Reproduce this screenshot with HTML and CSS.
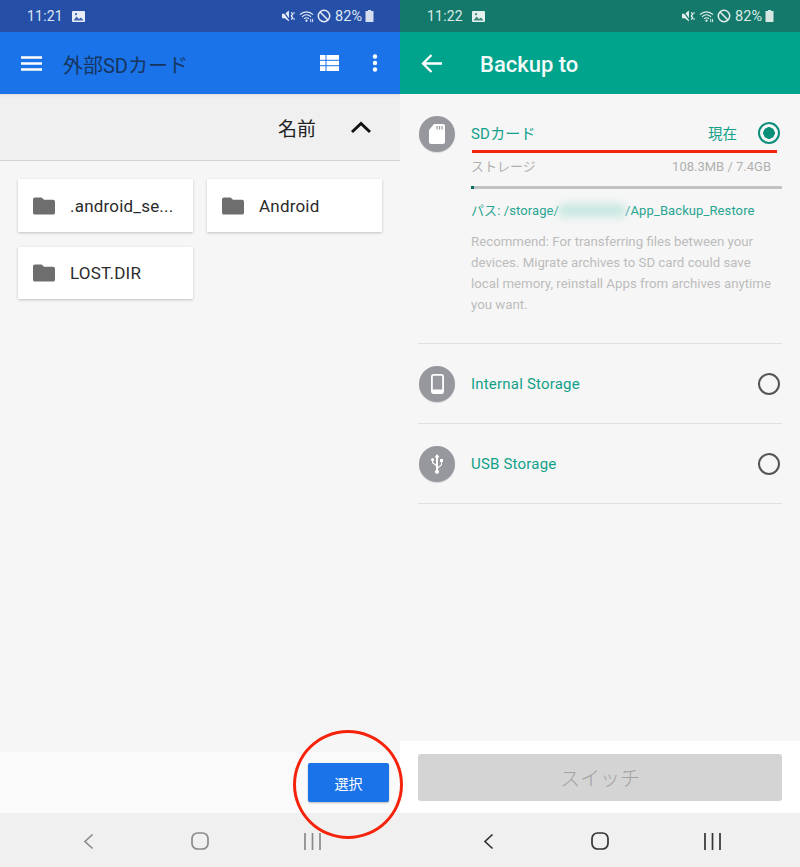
FILE: index.html
```html
<!DOCTYPE html>
<html lang="ja">
<head>
<meta charset="utf-8">
<title>Backup to</title>
<link rel="stylesheet" href="styles.css">
</head>
<body>
<div class="screens">
  <section class="pane pane-left">
    <header class="status status-blue">
      <span class="time">11:21</span>
      <svg class="pic" viewBox="0 0 13 11"><rect width="13" height="11" rx="1" fill="#e6edf8"/><path d="M1.500 9.500l3-4 2.500 2.500 2-1.500 2.500 3z" fill="#3f63b0"/><circle cx="4" cy="3.200" r="1.100" fill="#3f63b0"/></svg>
      <span class="spacer"></span>
      <svg class="sys-mute" viewBox="0 0 14 13"><path d="M0 4h3l4.500-3.500v12L3 9H0z" fill="#e6edf8"/><path d="M1 1l8 11" stroke="currentColor" stroke-width="1.300"/><path d="M10 2.500l1.500 2L10 6.500l1.500 2L10 10.500M12.500 2.500l1 1.500M12.500 9l1 1.500" stroke="#e6edf8" stroke-width="1.400" fill="none"/></svg>
      <svg class="sys-wifi" viewBox="0 0 16 13"><path d="M1 4.500c4-4 10-4 14 0M3.200 6.800c2.800-2.700 6.800-2.700 9.600 0M5.300 9c1.500-1.300 3.900-1.300 5.400 0" stroke="#e6edf8" stroke-width="1.200" fill="none"/><circle cx="8" cy="11" r="1.200" fill="#e6edf8"/><path d="M12.500 9v3.500M14.500 9v3.500" stroke="#e6edf8" stroke-width="1"/></svg>
      <svg class="sys-block" viewBox="0 0 13 13"><circle cx="6.500" cy="6.500" r="5.300" stroke="#e6edf8" stroke-width="1.400" fill="none"/><path d="M2.800 2.800l7.400 7.400" stroke="#e6edf8" stroke-width="1.400"/></svg>
      <span class="pct">82%</span>
      <svg class="batt" viewBox="0 0 8 12"><path d="M2.500 0h3v1H8v11H0V1h2.500z" fill="#d5deef"/></svg>
    </header>
    <div class="appbar appbar-blue">
      <svg class="menu" viewBox="0 0 21 15"><path d="M0 1.500h21M0 7.500h21M0 13.500h21" stroke="#fff" stroke-width="2.400"/></svg>
      <h1 class="title-left">外部SDカード</h1>
      <span class="spacer"></span>
      <svg class="list-view" viewBox="0 0 19 16"><path fill="#fff" d="M0 0h19v16H0z"/><path d="M0 5.300h19M0 10.700h19M6 0v16" stroke="#1a73e8" stroke-width="1"/></svg>
      <svg class="more" viewBox="0 0 6 18"><circle cx="3" cy="2.500" r="2.200" fill="#fff"/><circle cx="3" cy="9" r="2.200" fill="#fff"/><circle cx="3" cy="15.500" r="2.200" fill="#fff"/></svg>
    </div>
    <div class="sortbar">
      <span class="sort-label">名前</span>
      <svg class="sort-arrow" viewBox="0 0 22 13"><path d="M2 11l9-8.500 9 8.500" stroke="#111" stroke-width="3" fill="none"/></svg>
    </div>
    <main class="files">
      <div class="card"><svg class="folder" viewBox="0 0 23 18"><path d="M2 0h7l2.500 2.500H21a2 2 0 0 1 2 2V16a2 2 0 0 1-2 2H2a2 2 0 0 1-2-2V2a2 2 0 0 1 2-2z" fill="#6e6e6e"/></svg><span class="name">.android_se...</span></div>
      <div class="card"><svg class="folder" viewBox="0 0 23 18"><path d="M2 0h7l2.500 2.500H21a2 2 0 0 1 2 2V16a2 2 0 0 1-2 2H2a2 2 0 0 1-2-2V2a2 2 0 0 1 2-2z" fill="#6e6e6e"/></svg><span class="name">Android</span></div>
      <div class="card card-short"><svg class="folder" viewBox="0 0 23 18"><path d="M2 0h7l2.500 2.500H21a2 2 0 0 1 2 2V16a2 2 0 0 1-2 2H2a2 2 0 0 1-2-2V2a2 2 0 0 1 2-2z" fill="#6e6e6e"/></svg><span class="name">LOST.DIR</span></div>
    </main>
    <div class="footer-left"><button class="select">選択</button></div>
    <nav class="navbar navbar-faded navbar-left">
      <svg class="nav-back" viewBox="0 0 11 17"><path d="M9.500 1.500L2 8.500l7.500 7" stroke="currentColor" stroke-width="1.700" fill="none"/></svg>
      <svg class="nav-home" viewBox="0 0 18 18"><rect x="1" y="1" width="16" height="16" rx="5.500" stroke="currentColor" stroke-width="1.700" fill="none"/></svg>
      <svg class="nav-recent" viewBox="0 0 17 17"><path d="M1 0v17M8.500 0v17M16 0v17" stroke="currentColor" stroke-width="1.700"/></svg>
    </nav>
  </section>

  <section class="pane pane-right">
    <header class="status status-teal">
      <span class="time">11:22</span>
      <svg class="pic" viewBox="0 0 13 11"><rect width="13" height="11" rx="1" fill="#e6f0ee"/><path d="M1.500 9.500l3-4 2.500 2.500 2-1.500 2.500 3z" fill="#3a8a7e"/><circle cx="4" cy="3.200" r="1.100" fill="#3a8a7e"/></svg>
      <span class="spacer"></span>
      <svg class="sys-mute" viewBox="0 0 14 13"><path d="M0 4h3l4.500-3.500v12L3 9H0z" fill="#e6f0ee"/><path d="M1 1l8 11" stroke="currentColor" stroke-width="1.300"/><path d="M10 2.500l1.500 2L10 6.500l1.500 2L10 10.500M12.500 2.500l1 1.500M12.500 9l1 1.500" stroke="#e6f0ee" stroke-width="1.400" fill="none"/></svg>
      <svg class="sys-wifi" viewBox="0 0 16 13"><path d="M1 4.500c4-4 10-4 14 0M3.200 6.800c2.800-2.700 6.800-2.700 9.600 0M5.300 9c1.500-1.300 3.900-1.300 5.400 0" stroke="#e6f0ee" stroke-width="1.200" fill="none"/><circle cx="8" cy="11" r="1.200" fill="#e6f0ee"/><path d="M12.500 9v3.500M14.500 9v3.500" stroke="#e6f0ee" stroke-width="1"/></svg>
      <svg class="sys-block" viewBox="0 0 13 13"><circle cx="6.500" cy="6.500" r="5.300" stroke="#e6f0ee" stroke-width="1.400" fill="none"/><path d="M2.800 2.800l7.400 7.400" stroke="#e6f0ee" stroke-width="1.400"/></svg>
      <span class="pct">82%</span>
      <svg class="batt" viewBox="0 0 8 12"><path d="M2.500 0h3v1H8v11H0V1h2.500z" fill="#d5e6e3"/></svg>
    </header>
    <div class="appbar appbar-teal">
      <svg class="arrow" viewBox="0 0 21 19"><path d="M21 9.500H2M10.500 1L2 9.500l8.500 8.500" stroke="#fff" stroke-width="2.300" fill="none"/></svg>
      <h1 class="title-right">Backup to</h1>
    </div>
    <main class="options">
      <div class="opt opt-first">
        <div class="badge"><svg class="ic-sd" viewBox="0 0 16 20"><path d="M5 0h9a2 2 0 0 1 2 2v16a2 2 0 0 1-2 2H2a2 2 0 0 1-2-2V6z" fill="#fff"/><path d="M8 2v3.500M10.500 2v3.500M13 2v3.500" stroke="#97979e" stroke-width="1.200"/></svg></div>
        <div class="opt-body">
          <div class="opt-head"><span class="opt-title">SDカード</span><span class="now">現在</span><span class="radio radio-on"></span></div>
          <div class="usage"><span>ストレージ</span><span>108.3MB / 7.4GB</span></div>
          <div class="bar"><div class="bar-fill"></div></div>
          <div class="path">パス: /storage/<span class="redact"></span>/App_Backup_Restore</div>
          <p class="desc">Recommend: For transferring files between your devices. Migrate archives to SD card could save local memory, reinstall Apps from archives anytime you want.</p>
        </div>
      </div>
      <div class="opt opt-row">
        <div class="badge"><svg class="ic-phone" viewBox="0 0 13 20"><rect x="0.900" y="0.900" width="11.200" height="18.200" rx="1.800" fill="#97979e" stroke="#fff" stroke-width="1.800"/><rect x="1" y="15.500" width="11" height="3.600" fill="#fff"/></svg></div>
        <span class="opt-title opt-grow">Internal Storage</span><span class="radio"></span>
      </div>
      <div class="opt opt-row">
        <div class="badge"><svg class="ic-usb" viewBox="0 0 14 21"><path d="M7 1l2.500 3.500H8V14l3-2.500V9H10V6h3v3h-1v3l-4 3.500v1.600a2 2 0 1 1-2 0V13l-4-3V8a1.500 1.500 0 1 1 1.200 0V9.500L6 11.500v-7H4.500z" fill="#fff"/></svg></div>
        <span class="opt-title opt-grow">USB Storage</span><span class="radio"></span>
      </div>
    </main>
    <div class="footer-right"><button class="switch" disabled>スイッチ</button></div>
    <nav class="navbar">
      <svg class="nav-back" viewBox="0 0 11 17"><path d="M9.500 1.500L2 8.500l7.500 7" stroke="currentColor" stroke-width="1.700" fill="none"/></svg>
      <svg class="nav-home" viewBox="0 0 18 18"><rect x="1" y="1" width="16" height="16" rx="5.500" stroke="currentColor" stroke-width="1.700" fill="none"/></svg>
      <svg class="nav-recent" viewBox="0 0 17 17"><path d="M1 0v17M8.500 0v17M16 0v17" stroke="currentColor" stroke-width="1.700"/></svg>
    </nav>
  </section>
</div>
<div class="mark-circle"></div>
<div class="mark-line"></div>
</body>
</html>
```
FILE: styles.css
```css
* { box-sizing: border-box; }
html, body { margin: 0; padding: 0; }
body {
  width: 800px;
  height: 867px;
  overflow: hidden;
  position: relative;
  font-family: Roboto, "Noto Sans CJK JP", sans-serif;
}
.screens { display: flex; height: 867px; }
.pane { width: 400px; height: 867px; display: flex; flex-direction: column; background: #f6f6f6; }
.spacer { flex: 1; }

.status {
  height: 32px;
  flex: none;
  display: flex;
  align-items: center;
  padding: 0 26px 0 27px;
  color: #dfe7f5;
  font-size: 14px;
}
.status-blue { background: #264fa8; }
.status-teal { background: #14796a; color: #dcebe8; }
.time { width: 45px; letter-spacing: 0.2px; }
.pic { width: 13px; height: 11px; }
.sys-mute { width: 13px; height: 12px; margin-right: 4px; }
.status-blue .sys-mute { color: #264fa8; }
.status-teal .sys-mute { color: #14796a; }
.sys-wifi { width: 15px; height: 13px; margin-right: 3px; }
.sys-block { width: 14px; height: 14px; margin-right: 4px; }
.pct { margin-right: 3px; font-size: 14.5px; }
.batt { width: 9px; height: 12px; }

.appbar { height: 62px; flex: none; display: flex; align-items: center; color: #fff; }
.appbar-blue { background: #1a73e8; padding: 0 21px; }
.appbar-teal { background: #00a38c; padding: 0 0 0 21px; }
.menu { width: 21px; height: 15px; }
.title-left { margin: 2px 0 0 21px; font-size: 20px; font-weight: 400; color: #17355f; }
.list-view { width: 19px; height: 16px; margin-right: 33px; }
.more { width: 6px; height: 18px; margin-right: 1px; }
.arrow { width: 21px; height: 19px; }
.title-right { margin: 2px 0 0 38px; font-size: 22px; font-weight: 500; color: #f2fbf9; }

.sortbar {
  height: 67px;
  flex: none;
  background: #f0f0f0;
  border-bottom: 1px solid #d4d4d4;
  display: flex;
  align-items: center;
  justify-content: flex-end;
  padding: 0 28px 0 0;
  box-shadow: inset 0 3px 3px -2px #dcdcdc;
}
.sort-label { font-size: 19px; color: #222; margin-right: 34px; }
.sort-arrow { width: 22px; height: 13px; }

.files {
  flex: 1;
  display: grid;
  grid-template-columns: 175px 175px;
  grid-auto-rows: 53px;
  column-gap: 14px;
  row-gap: 15px;
  align-content: start;
  padding: 18px 18px 0;
}
.card {
  background: #fff;
  box-shadow: 0 1px 3px rgba(0, 0, 0, 0.22);
  border-radius: 1px;
  display: flex;
  align-items: center;
  padding: 0 0 0 15px;
  font-size: 17px;
  color: #2b2b2b;
}
.card-short { height: 52px; }
.folder { width: 22px; height: 18px; margin-right: 15px; }
.name { letter-spacing: 0.2px; }

.footer-left {
  height: 61px;
  flex: none;
  background: #fafafa;
  display: flex;
  align-items: center;
  justify-content: flex-end;
  padding: 0 11px 0 0;
}
.select {
  width: 81px;
  height: 39px;
  border: 0;
  border-radius: 2px;
  background: #1a73e8;
  color: #fff;
  font: 14px "Noto Sans CJK JP", sans-serif;
  box-shadow: 0 1px 2px rgba(0, 0, 0, 0.25);
}
.footer-right {
  height: 72px;
  flex: none;
  background: #fff;
  padding: 13px 18px 12px;
}
.switch {
  display: block;
  width: 364px;
  height: 47px;
  border: 0;
  border-radius: 3px;
  background: #d4d4d4;
  color: #a3a3a3;
  font: 300 20px "Noto Sans CJK JP", sans-serif;
}

.navbar {
  height: 54px;
  flex: none;
  background: #f0f0f0;
  display: flex;
  align-items: center;
  padding: 2px 79px 0 83px;
  justify-content: space-between;
  color: #333;
}
.navbar-faded { color: #8a8a8a; }
.nav-back { width: 11px; height: 17px; margin-right: 2px; }
.nav-home { width: 18px; height: 18px; }
.nav-recent { width: 17px; height: 17px; }

.options { flex: 1; padding: 0 18px; }
.opt { border-bottom: 1px solid #e0e0e0; display: flex; }
.opt-first { height: 250px; padding-top: 22px; }
.opt-row { height: 80px; align-items: center; }
.badge {
  width: 36px;
  height: 36px;
  flex: none;
  margin: 0 1px;
  border-radius: 50%;
  background: #97979e;
  box-shadow: 0 1px 1px rgba(0, 0, 0, 0.12);
  display: flex;
  align-items: center;
  justify-content: center;
}
.ic-sd { width: 16px; height: 20px; }
.ic-phone { width: 13px; height: 20px; }
.ic-usb { width: 14px; height: 21px; }
.opt-body { flex: 1; margin-left: 15px; min-width: 0; }
.opt-head { display: flex; align-items: center; height: 27px; margin-top: 3px; padding-right: 2px; }
.opt-title { font-size: 15px; color: #11a18a; letter-spacing: 0.2px; }
.opt-head .opt-title { flex: 1; }
.opt-row .opt-title { margin: 0 0 0 15px; }
.opt-grow { flex: 1; }
.now { font-size: 14.5px; color: #11a18a; margin-right: 21px; }
.radio {
  width: 22px;
  height: 22px;
  flex: none;
  border: 2px solid #555;
  border-radius: 50%;
  margin-right: 2px;
}
.opt-head .radio { margin-right: 0; }
.radio-on {
  border-color: #0a8f7b;
  background: radial-gradient(circle, #0a8f7b 0 5.5px, transparent 6px);
}
.usage {
  display: flex;
  justify-content: space-between;
  margin-top: 11px;
  padding-right: 11px;
  font-size: 13px;
  line-height: 20px;
  color: #b0b0b0;
}
.bar { height: 3px; margin-top: 9px; background: #c2c2c2; }
.bar-fill { width: 3px; height: 3px; background: #0b6e5e; }
.path { margin-top: 12px; font-size: 13px; line-height: 20px; color: #27a592; white-space: nowrap; letter-spacing: 0.1px; }
.redact {
  display: inline-block;
  width: 66px;
  height: 13px;
  vertical-align: -2px;
  background: #c6e7e1;
  filter: blur(4px);
}
.desc { margin: 10px 0 0; font-size: 13.25px; line-height: 21px; color: #bcbcbc; width: 308px; }

.mark-circle {
  position: absolute;
  left: 293px;
  top: 730px;
  width: 110px;
  height: 109px;
  border: 3px solid #f5230b;
  border-radius: 50%;
}
.mark-line {
  position: absolute;
  left: 472px;
  top: 150px;
  width: 305px;
  height: 3px;
  background: #f5230b;
}
```
